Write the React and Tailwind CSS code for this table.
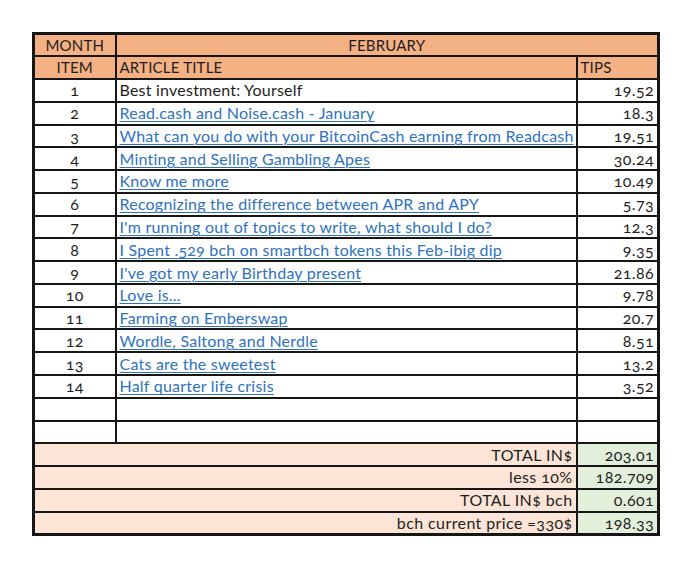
import React from "react";

const rows = [
  ["1", "Best investment: Yourself", "19.52", false],
  ["2", "Read.cash and Noise.cash - January", "18.3", true],
  ["3", "What can you do with your BitcoinCash earning from Readcash", "19.51", true],
  ["4", "Minting and Selling Gambling Apes", "30.24", true],
  ["5", "Know me more", "10.49", true],
  ["6", "Recognizing the difference between APR and APY", "5.73", true],
  ["7", "I'm running out of topics to write, what should I do?", "12.3", true],
  ["8", "I Spent .529 bch on smartbch tokens this Feb-ibig dip", "9.35", true],
  ["9", "I've got my early Birthday present", "21.86", true],
  ["10", "Love is...", "9.78", true],
  ["11", "Farming on Emberswap", "20.7", true],
  ["12", "Wordle, Saltong and Nerdle", "8.51", true],
  ["13", "Cats are the sweetest", "13.2", true],
  ["14", "Half quarter life crisis", "3.52", true],
];

const summary = [
  ["TOTAL IN$", "203.01"],
  ["less 10%", "182.709"],
  ["TOTAL IN$ bch", "0.601"],
  ["bch current price =330$", "198.33"],
];

const td = "border-2 border-[#161616] p-0 leading-none whitespace-nowrap overflow-hidden";

export default function App() {
  return (
    <div className="w-[690px] h-[580px] bg-white pt-[32px] pl-[32px] text-[#1e1e1e] [font-family:Lato,'Liberation_Sans',sans-serif] text-[16px] tracking-[0.4px] [font-variant-numeric:oldstyle-nums]">
      <table className="table-fixed border-collapse border-[3px] border-[#161616] w-[625px]">
        <colgroup>
          <col className="w-[82px]" />
          <col className="w-[461px]" />
          <col className="w-[82px]" />
        </colgroup>
        <tbody>
          <tr className="h-[22.77px] bg-[#f4b183] text-[15px] tracking-[0.2px]">
            <td className={`${td} text-center`}>MONTH</td>
            <td className={`${td} text-center`} colSpan={2}>FEBRUARY</td>
          </tr>
          <tr className="h-[22.77px] bg-[#f4b183] text-[15px] tracking-[0.2px]">
            <td className={`${td} text-center`}>ITEM</td>
            <td className={`${td} pl-[3px]`}>ARTICLE TITLE</td>
            <td className={`${td} pl-[3px]`}>TIPS</td>
          </tr>
          {rows.map(([n, title, tip, link]) => (
            <tr key={n} className="h-[22.77px] bg-white">
              <td className={`${td} text-center`}>{n}</td>
              <td className={`${td} pl-[3px] max-w-0 tracking-[0.22px]`}>
                {link ? (
                  <span className="text-[#2e72bf] underline underline-offset-[2px] decoration-1">{title}</span>
                ) : (
                  <span>{title}</span>
                )}
              </td>
              <td className={`${td} text-right pr-[3px]`}>{tip}</td>
            </tr>
          ))}
          {[0, 1].map((i) => (
            <tr key={"b" + i} className="h-[22.77px] bg-white">
              <td className={td}></td>
              <td className={td}></td>
              <td className={td}></td>
            </tr>
          ))}
          {summary.map(([label, val]) => (
            <tr key={label} className="h-[22.77px]">
              <td className={`${td} bg-[#fce4d6] text-right pr-[3px]`} colSpan={2}>{label}</td>
              <td className={`${td} bg-[#e2efda] text-right pr-[3px]`}>{val}</td>
            </tr>
          ))}
        </tbody>
      </table>
    </div>
  );
}
